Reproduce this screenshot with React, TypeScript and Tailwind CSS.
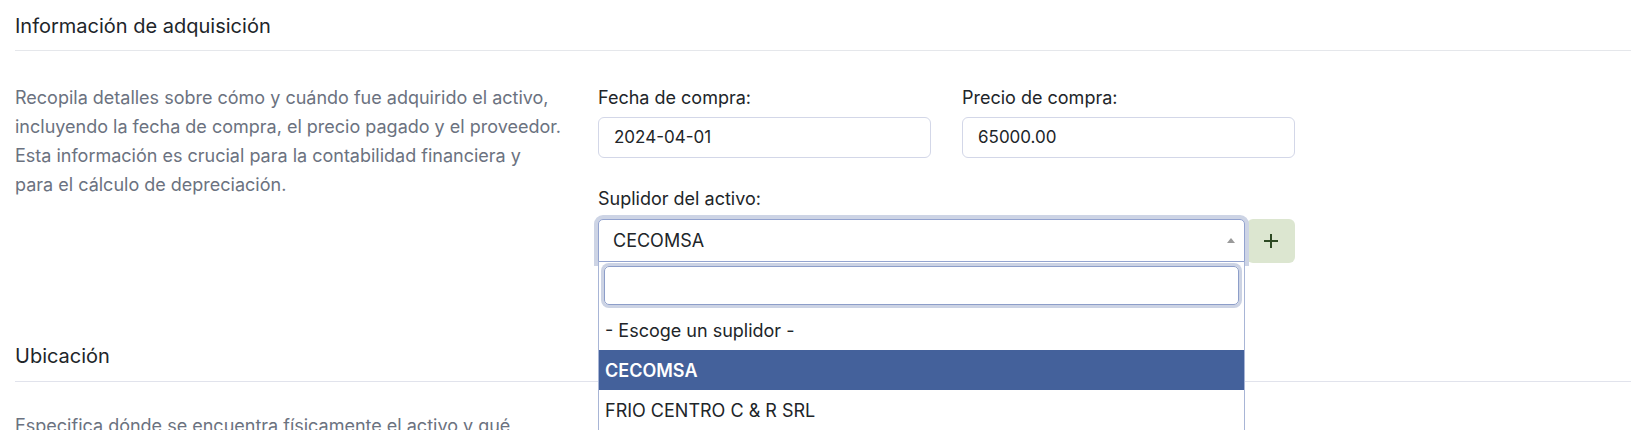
import React from "react";

export default function App() {
  return (
    <div className="w-[1631px] h-[430px] overflow-hidden bg-white font-['Inter',sans-serif] text-[#212529]">
      <section className="pl-[15px]">
        <div className="pt-[11px] pb-[9px] border-b border-[#e5e7eb] text-[20px] leading-[30px]">
          Información de adquisición
        </div>
        <div className="flex items-start pb-[67px]">
          <p className="w-[583px] pr-[15px] mt-[32px] text-[18px] leading-[29px] text-[#6b7280] whitespace-nowrap">
            Recopila detalles sobre cómo y cuándo fue adquirido el activo,
            <br />
            incluyendo la fecha de compra, el precio pagado y el proveedor.
            <br />
            Esta información es crucial para la contabilidad financiera y
            <br />
            para el cálculo de depreciación.
          </p>
          <div className="w-[697px] mt-[33px] text-[18px]">
            <div className="grid grid-cols-2 gap-x-[31px]">
              <div>
                <label className="block leading-[27px] mb-[6px]">Fecha de compra:</label>
                <div className="h-[41px] border border-[#d3d7e8] rounded-md px-[15px] flex items-center text-[17px]">
                  2024-04-01
                </div>
              </div>
              <div>
                <label className="block leading-[27px] mb-[6px]">Precio de compra:</label>
                <div className="h-[41px] border border-[#d3d7e8] rounded-md px-[15px] flex items-center text-[17px]">
                  65000.00
                </div>
              </div>
            </div>
            <div className="mt-[27px]">
              <label className="block leading-[27px]">Suplidor del activo:</label>
              <div className="flex items-start mt-[7px]">
                <div className="relative z-10 w-[647px]">
                  <div className="h-[43px] border border-[#93a3cf] rounded-t-[5px] shadow-[0_0_0_4px_#cdd4e5] flex items-center justify-between pl-[14px] pr-[9px] bg-white">
                    <span>CECOMSA</span>
                    <span className="w-0 h-0 border-l-[4px] border-r-[4px] border-b-[5px] border-l-transparent border-r-transparent border-b-[#9a9a9a]"></span>
                  </div>
                  <div className="absolute left-0 top-full w-full bg-white border border-t-0 border-[#a8b5d6]">
                    <div className="pt-[4px] px-[5px] pb-[5px]">
                      <div className="h-[39px] border border-[#8d9ec9] rounded-[5px] shadow-[0_0_0_3px_#ccd3e4]"></div>
                    </div>
                    <div className="h-[40px] flex items-center pl-[6px]">- Escoge un suplidor -</div>
                    <div className="h-[40px] flex items-center pl-[6px] bg-[#44619b] text-white font-semibold">CECOMSA</div>
                    <div className="h-[40px] flex items-center pl-[6px]">FRIO CENTRO C &amp; R SRL</div>
                  </div>
                </div>
                <button className="ml-[2px] w-[48px] h-[44px] rounded-md bg-[#dce6d0] flex items-center justify-center">
                  <svg width="16" height="16" viewBox="0 0 16 16">
                    <path d="M8 1v14M1 8h14" stroke="#2e4a24" strokeWidth="2" fill="none" />
                  </svg>
                </button>
              </div>
            </div>
          </div>
        </div>
      </section>
      <section className="pl-[15px]">
        <div className="pt-[11px] pb-[10px] border-b border-[#e1e3ec] text-[20px] leading-[30px]">
          Ubicación
        </div>
        <p className="w-[583px] pr-[15px] mt-[29px] text-[18px] leading-[29px] text-[#6b7280] whitespace-nowrap">
          Especifica dónde se encuentra físicamente el activo y qué
          <br />
          departamento es responsable de su uso y mantenimiento.
        </p>
      </section>
    </div>
  );
}
